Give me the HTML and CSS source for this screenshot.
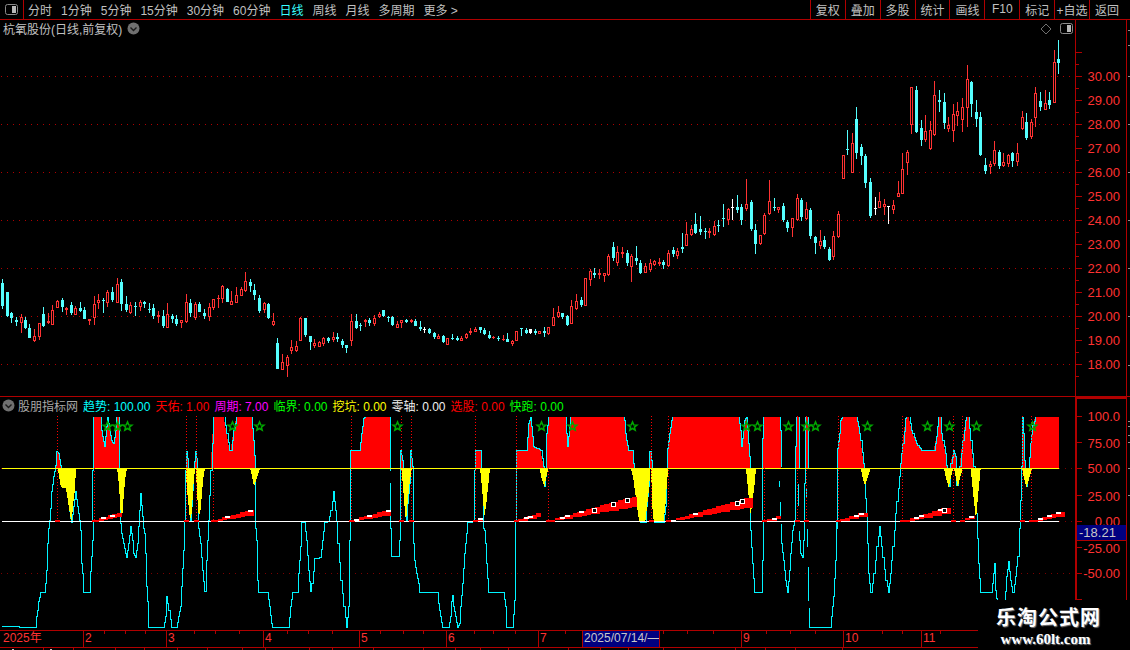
FILE: index.html
```html
<!DOCTYPE html>
<html lang="zh-CN">
<head>
<meta charset="utf-8">
<title>K线图</title>
<link rel="stylesheet" href="styles.css">
</head>
<body>
<div class="app">
  <header class="toolbar">
    <div class="tool-icon">
      <svg class="mini" width="13" height="11" viewBox="0 0 13 11"><rect x="0.5" y="0.5" width="12" height="10" rx="2" class="mini-frame"/><rect x="7" y="2" width="4" height="7" class="mini-fill"/></svg>
    </div>
    <nav class="periods">
      <span>分时</span><span>1分钟</span><span>5分钟</span><span>15分钟</span><span>30分钟</span><span>60分钟</span>
      <span class="on">日线</span><span>周线</span><span>月线</span><span>多周期</span><span>更多 &gt;</span>
    </nav>
    <nav class="actions">
      <span>复权</span><span>叠加</span><span>多股</span><span>统计</span><span>画线</span><span>F10</span><span>标记</span><span>+自选</span><span>返回</span>
    </nav>
  </header>

  <section class="pane pane-main">
    <svg id="price" class="plot" width="1075" height="376" viewBox="0 20 1075 376"></svg>
    <svg class="axis" width="55" height="376" viewBox="1075 20 55 376">
      <path class="axis-line" d="M1075.5 20V396M1126.5 20V396"/>
      <path class="axis-line" d="M1076 76.5h6M1076 100.5h6M1076 124.5h6M1076 148.5h6M1076 172.5h6M1076 196.5h6M1076 220.5h6M1076 244.5h6M1076 268.5h6M1076 292.5h6M1076 316.5h6M1076 340.5h6M1076 364.5h6M1076 52.5h6"/>
      <path class="axis-line" d="M1076 64.5h3M1076 88.5h3M1076 112.5h3M1076 136.5h3M1076 160.5h3M1076 184.5h3M1076 208.5h3M1076 232.5h3M1076 256.5h3M1076 280.5h3M1076 304.5h3M1076 328.5h3M1076 352.5h3M1076 376.5h3"/>
      <path class="axis-side" d="M1128 30h2M1128 45h2M1128 76h2M1128 124h2M1128 172h2M1128 220h2M1128 268h2M1128 316h2M1128 365h2"/>
      <g class="axis-text">
        <text x="1120" y="81">30.00</text><text x="1120" y="105">29.00</text><text x="1120" y="129">28.00</text>
        <text x="1120" y="153">27.00</text><text x="1120" y="177">26.00</text><text x="1120" y="201">25.00</text>
        <text x="1120" y="225">24.00</text><text x="1120" y="249">23.00</text><text x="1120" y="273">22.00</text>
        <text x="1120" y="297">21.00</text><text x="1120" y="321">20.00</text><text x="1120" y="345">19.00</text>
        <text x="1120" y="369">18.00</text>
      </g>
    </svg>
    <div class="pane-head">
      <div class="head-left">
        <span>杭氧股份(日线,前复权)</span>
        <svg class="chev" width="13" height="13" viewBox="0 0 13 13"><circle cx="6.5" cy="6.5" r="6" class="chev-disc"/><path d="M3.5 5.5l3 3 3-3" class="chev-mark"/></svg>
      </div>
      <div class="head-right">
        <svg width="12" height="12" viewBox="0 0 12 12"><path d="M6 1l5 5-5 5-5-5z" class="diamond"/></svg>
        <svg class="mini" width="13" height="11" viewBox="0 0 13 11"><rect x="0.5" y="0.5" width="12" height="10" rx="2" class="mini-frame"/><rect x="7" y="2" width="4" height="7" class="mini-fill"/></svg>
      </div>
    </div>
  </section>

  <section class="pane pane-ind">
    <svg id="indicator" class="plot" width="1075" height="233" viewBox="0 397 1075 233"></svg>
    <svg class="axis" width="55" height="233" viewBox="1075 397 55 233">
      <path class="axis-thick" d="M1076 397V630M1075 398H1126"/>
      <path class="axis-line" d="M1126.5 397V630"/>
      <path class="axis-line" d="M1077 416.5h5M1077 442.5h5M1077 468.5h5M1077 495.5h5M1077 521.5h5M1077 547.5h5M1077 573.5h5M1077 599.5h5"/>
      <path class="axis-side" d="M1128 421h2M1128 426h2M1128 435h2M1128 442h2M1128 468h2M1128 495h2"/>
      <g class="axis-text">
        <text x="1120" y="421">100.0</text><text x="1120" y="448">75.00</text><text x="1120" y="473">50.00</text>
        <text x="1120" y="501">25.00</text><text x="1120" y="526">0.00</text><text x="1120" y="553">-25.00</text>
        <text x="1120" y="578">-50.00</text>
      </g>
      <rect class="value-box" x="1077" y="525" width="49" height="15"/>
      <path class="axis-line" d="M1077 540.5h49"/>
      <text class="value-text" x="1079" y="537">-18.21</text>
    </svg>
    <div class="pane-head ind-head">
      <svg class="chev" width="13" height="13" viewBox="0 0 13 13"><circle cx="6.5" cy="6.5" r="6" class="chev-disc"/><path d="M3.5 5.5l3 3 3-3" class="chev-mark"/></svg>
      <span class="ind-name">股朋指标网</span>
      <span class="c-cyan">趋势: 100.00</span>
      <span class="c-red">天佑: 1.00</span>
      <span class="c-mag">周期: 7.00</span>
      <span class="c-green">临界: 0.00</span>
      <span class="c-yellow">挖坑: 0.00</span>
      <span class="c-white">零轴: 0.00</span>
      <span class="c-red">选股: 0.00</span>
      <span class="c-green">快跑: 0.00</span>
    </div>
  </section>

  <div class="time-axis">
    <span>2025年</span><span>2</span><span>3</span><span>4</span><span>5</span><span>6</span><span>7</span>
    <span class="cursor-date">2025/07/14/—</span><span></span><span>9</span><span>10</span><span>11</span>
    <svg class="time-ticks" width="978" height="4" viewBox="0 0 978 4">
      <path class="axis-line" d="M104.5 0v3M125.5 0v3M145.5 0v3M194.5 0v3M215.5 0v3M239.5 0v3M287.5 0v3M308.5 0v3M332.5 0v3M380.5 0v3M403.5 0v3M423.5 0v3M474.5 0v3M493.5 0v3M515.5 0v3M565.5 0v3M663.5 0v3M687.5 0v3M713.5 0v3M766.5 0v3M790.5 0v3M815.5 0v3M882.5 0v3M902.5 0v3M940.5 0v3"/>
    </svg>
  </div>
  <svg class="strip" width="1130" height="3" viewBox="0 0 1130 3">
    <path class="axis-line" d="M43.5 0v3M73.5 0v3M115.5 0v3M144.5 0v3M177.5 0v3M207.5 0v3M242.5 0v3M265.5 0v3M309.5 0v3M332.5 0v3M373.5 0v3M423.5 0v3M455.5 0v3M480.5 0v3M508.5 0v3M568.5 0v3M600.5 0v3M628.5 0v3M663.5 0v3M735.5 0v3M765.5 0v3M795.5 0v3M842.5 0v3"/>
    <path class="strip-ink" d="M8 2h2M12 1h2M17 2h3M50 1h2M845 2h4M857 2h8"/>
  </svg>

  <aside class="watermark">
    <div class="wm-title">乐淘公式网</div>
    <div class="wm-url">www.60lt.com</div>
  </aside>
</div>
<script src="chart.js"></script>
</body>
</html>
```

FILE: styles.css
```css
* { box-sizing: border-box; }
html, body { margin: 0; padding: 0; background: #000; overflow: hidden; }
body { font-family: "Liberation Sans", "Noto Sans CJK SC", sans-serif; font-size: 12px; color: #c0c0c0; }
.app { position: relative; width: 1130px; height: 650px; display: flex; flex-direction: column; background: #000; overflow: hidden; }

.toolbar { display: flex; height: 20px; border-bottom: 1px solid #b00000; align-items: stretch; flex: none; }
.tool-icon { width: 24px; border-right: 1px solid #b00000; display: flex; align-items: center; justify-content: center; }
.periods { display: flex; flex: 1; align-items: center; gap: 9px; padding: 0 0 1px 4px; white-space: nowrap; }
.periods .on { color: #39ffff; }
.actions { display: flex; align-items: stretch; }
.actions span { width: 34.9px; padding-bottom: 1px; border-left: 1px solid #b00000; display: flex; align-items: center; justify-content: center; white-space: nowrap; }
.actions span:last-child { width: 41px; padding-right: 6px; }

.mini-frame { fill: none; stroke: #8a8a8a; }
.mini-fill { fill: #b8b8b8; }
.chev-disc { fill: #707070; }
.chev-mark { fill: none; stroke: #1a1a1a; stroke-width: 1.4; }
.diamond { fill: none; stroke: #707070; }

.pane { position: relative; display: flex; flex: none; }
.pane-main { height: 376px; }
.pane-ind { height: 234px; border-top: 1px solid #b00000; }
.plot, .axis { display: block; flex: none; }

.pane-head { position: absolute; left: 0; top: 0; width: 1075px; height: 17px; display: flex; align-items: center; }
.head-left { display: flex; align-items: center; gap: 5px; padding-left: 3px; flex: 1; }
.head-right { display: flex; align-items: center; gap: 8px; padding-right: 2px; }
.ind-head { gap: 5px; padding-left: 2px; white-space: nowrap; height: 16px; }
.ind-head .ind-name { margin-left: -2px; color: #a8a8a8; }
.c-cyan { color: #00ffff; }
.c-red { color: #ff0000; }
.c-mag { color: #ff00ff; }
.c-green { color: #00ff00; }
.c-yellow { color: #ffff00; }
.c-white { color: #f0f0f0; }

.axis-line { fill: none; stroke: #b00000; stroke-width: 1; shape-rendering: crispEdges; }
.axis-thick { fill: none; stroke: #b00000; stroke-width: 2; shape-rendering: crispEdges; }
.axis-side { fill: none; stroke: #909090; stroke-width: 1; shape-rendering: crispEdges; }
.axis-text text { fill: #ff3232; font-size: 13px; text-anchor: end; font-family: "Liberation Sans", sans-serif; }
.value-box { fill: #000080; }
.value-text { fill: #c8c8c8; font-size: 13px; font-family: "Liberation Sans", sans-serif; }

.time-axis { position: relative; flex: none; height: 16px; width: 978px; display: grid; grid-template-columns: 83px 83px 97px 96px 87px 92px 44px 77px 82px 102px 78px 57px; border-top: 1px solid #b00000; border-bottom: 1px solid #b00000; box-sizing: content-box; color: #ff3232; font-size: 12px; line-height: 15px; }
.time-axis span { padding-left: 1px; border-left: 1px solid #b00000; white-space: nowrap; overflow: hidden; }
.time-axis span:first-child { padding-left: 3px; border-left: 0; }
.time-axis .cursor-date { background: #000080; color: #c8c8c8; padding-left: 1px; }
.time-axis .cursor-date + span { border-left: 1px solid #b00000; }
.time-ticks { position: absolute; left: 0; top: 0; }
.strip { display: block; flex: none; }
.strip-ink { fill: none; stroke: #c8c8c8; stroke-width: 1; shape-rendering: crispEdges; }

.watermark { position: absolute; right: 0; bottom: 0; width: 152px; height: 50px; background: #000; display: flex; flex-direction: column; align-items: center; padding-top: 6px; padding-right: 14px; }
.wm-title { font-family: "Noto Sans CJK SC", sans-serif; font-weight: 700; font-size: 20px; line-height: 21px; letter-spacing: 1px; margin-left: 3px; color: #fff; text-shadow: 1px 1px 1px #777; }
.wm-url { font-family: "Liberation Serif", serif; font-weight: 700; font-size: 15px; line-height: 16px; margin-top: 4px; margin-right: 3px; color: #fff; text-shadow: 1px 1px 1px #777; }

#price .wick { shape-rendering: crispEdges; }
.grid { fill: none; stroke: #b00000; stroke-dasharray: 1 5; shape-rendering: crispEdges; }
.grid-dim { fill: none; stroke: #7a0000; stroke-dasharray: 1 5; shape-rendering: crispEdges; }
.area { fill: #ff0000; shape-rendering: crispEdges; }
.wedge { fill: #ffff00; shape-rendering: crispEdges; }
.line-cyan { fill: none; stroke: #00f4ff; stroke-width: 1; shape-rendering: crispEdges; }
.line-yellow { fill: none; stroke: #ffff00; stroke-width: 1.4; shape-rendering: crispEdges; }
.line-white { fill: none; stroke: #fff; stroke-width: 1.4; shape-rendering: crispEdges; }
.drop { fill: none; stroke: #ff0000; stroke-dasharray: 1 2; shape-rendering: crispEdges; }
.star { fill: none; stroke: #00a800; stroke-width: 1.5; }
```

FILE: chart.js
```js
(function () {
  var NS = 'http://www.w3.org/2000/svg';
  function el(parent, tag, attrs) {
    var n = document.createElementNS(NS, tag);
    for (var k in attrs) n.setAttribute(k, attrs[k]);
    parent.appendChild(n);
    return n;
  }

  /* ---------- price pane: [colour, x, wickTop, bodyTop, bodyBottom, wickBottom], read at 3x ---------- */
  var A = [['c',7,57,69,138,147],['c',20,114,97,169,171],['c',34,155,159,174,189],['c',49,171,180,186,198],['r',62,163,171,189,219],['c',76,171,180,204,206],['c',88,193,204,234,234],['r',103,207,228,243,246],['r',118,189,189,231,240],['c',130,141,162,198,201],['r',145,159,183,190,192],['r',157,135,150,195,195],['r',172,120,123,144,144],['c',187,114,120,141,156],['r',199,141,144,150,165],['c',214,126,135,159,165],['r',226,138,144,165,165],['c',241,126,144,153,156],['c',253,141,150,177,177],['r',268,177,177,183,195],['r',283,108,132,174,195],['r',295,102,120,129,147],['c',310,114,120,122,159],['r',322,90,96,129,141],['c',337,81,96,120,126],['r',352,54,72,129,129],['c',364,57,66,132,153],['c',379,108,132,150,156],['r',391,126,135,159,162],['c',406,126,138,140,168],['r',421,120,126,141,153],['c',433,123,126,132,144],['c',448,129,147,150,159],['c',460,132,144,168,177],['r',475,153,165,171,189],['c',490,150,168,198,204],['r',502,129,162,204,204],['c',517,162,168,177,189],['c',529,165,177,192,198],['r',544,180,180,189,204],['r',559,102,126,186,189],['c',571,117,129,159,171],['r',586,126,132,174,180],['c',598,126,132,156,156],['c',613,147,159,168,177],['r',628,129,141,171,183],['r',640,117,117,144,150],['r',655,105,114,117,144],['r',667,75,78,117,129],['c',682,84,87,126,126],['r',694,93,123,135,135],['r',709,81,105,129,129],['r',724,81,87,108,108],['r',736,36,63,93,96],['c',751,57,66,78,96],['c',763,72,90,105,120],['c',778,105,114,153,159],['r',793,126,129,150,159],['c',805,129,132,174,177],['r',820,159,183,195,198],['c',832,234,249,327,327],['r',847,282,306,330,330],['r',862,285,291,318,351],['r',874,240,261,273,282],['r',889,243,258,273,276],['r',901,171,174,243,243],['c',916,174,174,225,231],['c',931,228,228,246,270],['r',943,237,249,258,264],['r',958,243,246,261,261],['r',970,231,234,252,258],['c',985,231,234,243,249],['r',1000,216,232,240,246],['c',1012,219,231,237,246],['c',1027,237,243,255,264],['c',1039,255,255,264,279],['r',1054,162,183,243,258],['c',1069,162,183,204,207],['c',1081,189,195,198,213],['r',1096,177,180,186,201],['c',1108,174,180,189,198],['r',1123,165,174,192,198],['r',1138,156,162,171,174],['c',1150,150,150,168,171],['c',1165,168,171,173,186],['c',1177,168,171,195,198],['r',1192,183,192,204,204]];
  var B = [['r',4,450,450,459,474],['c',19,447,450,456,459],['r',34,447,450,456,459],['c',46,447,453,468,468],['c',61,453,471,477,483],['w',73,471,477,478,489],['c',88,474,477,489,492],['c',103,486,489,501,507],['r',115,492,498,507,507],['c',130,495,498,516,519],['r',142,504,504,525,525],['c',157,492,504,507,510],['c',172,498,504,510,513],['r',184,498,504,513,513],['r',199,489,492,504,507],['r',211,474,483,489,495],['r',226,471,477,486,486],['c',241,471,471,480,489],['c',253,474,480,492,495],['c',268,483,495,504,507],['r',280,498,501,504,507],['c',295,498,505,507,513],['r',310,495,507,508,513],['c',322,489,507,516,516],['r',337,510,513,522,528],['r',349,483,483,513,513],['c',364,474,474,477,498],['c',379,474,480,489,492],['w',391,477,477,490,492],['c',406,477,483,489,495],['r',418,483,483,492,492],['c',433,471,483,489,501],['r',445,471,471,492,495],['r',460,414,441,468,468],['r',475,408,426,441,444],['c',487,429,429,441,447],['c',502,435,438,465,468],['r',514,390,408,462,462],['r',529,372,393,417,420],['c',544,381,390,405,411],['r',556,324,324,408,408],['r',571,297,303,330,348],['c',583,294,309,315,324],['r',598,297,309,315,327],['r',613,309,309,318,336],['r',625,252,258,315,318],['c',640,216,231,264,273],['r',652,228,246,279,288],['r',667,231,246,252,264],['c',682,240,249,279,288],['r',694,252,258,291,336],['c',709,228,264,273,285],['c',721,270,279,309,312],['r',736,279,288,309,309],['r',751,267,279,300,306],['r',763,270,273,285,288],['r',778,264,276,282,288],['c',790,270,276,285,297],['r',805,240,249,288,291],['c',820,231,240,252,261],['r',832,234,243,258,267],['c',847,189,231,237,249],['r',859,156,192,228,228],['r',874,165,177,195,198],['c',886,129,162,189,192],['c',901,138,177,186,195],['c',916,174,183,185,207],['r',928,174,183,189,204],['r',943,153,168,195,198],['c',955,150,165,167,186],['c',970,102,144,147,171],['r',985,114,117,150,165],['w',997,87,111,114,150],['c',1012,75,111,120,129],['c',1024,102,111,150,165],['r',1039,27,102,117,123],['c',1054,90,96,177,183],['c',1066,162,180,222,252],['r',1081,195,195,222,225],['r',1093,129,135,192,195],['r',1108,30,93,132,135],['c',1123,84,111,114,123],['r',1135,111,111,120,129],['c',1150,99,108,150,156],['c',1162,150,156,174,186],['r',1177,144,144,174,201],['r',1192,72,84,150,153],['c',1204,84,90,141,153],['r',1219,96,117,147,150],['c',1231,114,120,198,207],['c',1246,198,201,219,252],['r',1261,180,213,228,237],['c',1273,198,210,231,237],['c',1288,231,237,270,273],['r',1300,183,198,261,270],['r',1315,123,132,201,204]];
  var C = [['r',190,346,346,416,416],['c',202,270,327,330,345],['r',217,279,309,399,399],['c',229,201,237,339,357],['c',244,312,321,348,375],['c',256,342,348,429,444],['c',271,414,426,528,534],['w',286,471,504,507,525],['r',298,456,483,504,504],['r',313,477,492,501,525],['w',325,498,498,500,552],['r',340,480,495,510,522],['r',355,423,459,471,471],['r',367,339,387,462,462],['r',382,330,336,369,405],['r',394,141,141,255,282],['c',409,138,150,276,279],['c',424,240,264,300,318],['r',436,225,273,300,306],['r',451,243,270,327,330],['r',463,123,165,285,288],['c',478,150,180,186,216],['c',493,159,186,249,267],['r',505,231,255,267,276],['r',520,192,222,273,306],['r',532,186,213,228,258],['r',547,174,201,240,276],['r',562,75,117,204,261],['c',574,123,126,192,231],['c',589,180,216,237,261],['c',601,216,231,345,348],['c',616,354,375,393,402],['r',631,363,372,381,402],['r',643,303,330,372,378],['c',658,330,336,378,387],['r',670,339,366,378,381],['r',685,342,345,372,381],['c',697,336,339,363,381],['r',712,309,339,366,378],['r',727,213,231,267,270],['c',739,219,246,294,300],['r',754,237,246,291,297],['r',766,141,159,234,261],['c',781,156,183,201,213],['r',796,150,189,210,210],['c',808,156,180,195,207],['r',823,30,66,189,189],['c',835,0,57,69,102]];

  var price = document.getElementById('price');
  [76.5, 124.5, 172.5, 220.5, 268.5, 316.5, 364.5].forEach(function (y) {
    el(price, 'path', { d: 'M1 ' + y + 'H1075', 'class': 'grid' });
  });
  var FILL = { c: '#55ffff', r: '#ff3232', w: '#ffffff' };
  function candles(list, xo, yo) {
    list.forEach(function (k) {
      var col = FILL[k[0]], p = Math.round(xo + k[1] / 3);
      var wt = Math.round(yo + k[2] / 3), bt = Math.round(yo + k[3] / 3), bb = Math.round(yo + k[4] / 3), wb = Math.round(yo + k[5] / 3);
      el(price, 'rect', { x: p, y: wt, width: 1, height: Math.max(1, wb - wt), fill: col, 'class': 'wick' });
      var h = bb - bt;
      if (h < 2) {
        el(price, 'rect', { x: p - 1, y: bt, width: 3, height: 1, fill: col, 'class': 'wick' });
      } else if (k[0] === 'r') {
        el(price, 'rect', { x: p - 0.5, y: bt + 0.5, width: 2, height: h - 1, fill: '#000', stroke: col, 'class': 'wick' });
      } else {
        el(price, 'rect', { x: p - 1, y: bt, width: 3, height: h, fill: col, 'class': 'wick' });
      }
    });
  }
  candles(A, 0, 260);
  candles(B, 400, 170);
  candles(C, 780, 40);

  /* ---------- indicator pane ---------- */
  var ind = document.getElementById('indicator');
  var W3 = [0, 390], W4 = [300, 390], W5 = [600, 400], W6 = [850, 400], W7 = [0, 520], W8 = [400, 520];
  var trace = [
    [W7, [3,318,105,322,108,290,112,270,116,245,120,218,132,216,135,190,138,150,142,70,146,25,149,0]],
    [W3, [150,355,155,305,160,260,165,225,170,183,175,190,180,225,188,280,198,295,205,340,212,385,214,397,220,350,226,305,232,350,238,390]],
    [W7, [240,30,245,130,250,190,250,217,270,217,272,155,277,60,279,0]],
    [W3, [278,240,280,78,300,78,305,120,310,155,313,170,318,110,322,78,328,120,335,150,340,160,345,120,350,78,355,78,357,170,358,240,360,300,361,400]],
    [W7, [365,40,370,70,375,100,379,112,384,70,391,18,396,60,401,100,407,112,412,70,415,20]],
    [W3, [421,310,427,380,430,415]],
    [W7, [432,40,436,100,440,200,444,290,446,322,491,322,495,290,499,230,505,270,513,322,530,322,535,290,540,260,545,200,550,90,553,0]],
    [W3, [555,240,558,183,563,205,566,300,572,395,578,300,581,240,585,183,590,205,592,300,595,415]],
    [W7, [600,70,606,150,612,215,616,215,620,120,625,0]],
    [W3, [630,240,640,78,670,78,680,130,688,180,692,180,700,120,710,78,755,78,760,150,765,240,765,415]],
    [W7, [768,60,772,180,776,217,803,217,808,260,815,310,818,322,864,322,870,260,876,218,892,216,896,160,900,80,905,8,913,8,918,60,925,150,930,215,935,190,942,115,960,112,966,60,972,8,985,5]],
    [W4, [85,395,90,360,100,305,105,360,110,395,113,415]],
    [W7, [1012,70,1020,180,1030,260,1040,322,1044,260,1048,60,1052,0]],
    [W4, [152,180,178,180,185,130,190,85,195,78,268,78,270,130,272,240,null,268,280,270,415]],
    [W7, [1174,110,1195,110,1198,60,1200,0]],
    [W4, [300,280,302,180,308,210,312,340,318,395,322,340,328,280,332,180,338,230,340,400]],
    [W8, [40,10,40,70,44,120,48,160,54,190,58,217,112,217,116,250,120,290,127,322,145,322,150,290,155,245,157,225,160,260,165,290,172,322,178,310,182,260,186,190,192,100,198,40,203,8,212,8]],
    [W4, [520,390,522,240,525,180,540,180,545,240,550,300,550,415]],
    [W8, [252,30,256,70,260,130,265,217,308,217,315,260,320,322,338,322,342,240,345,100,347,0]],
    [W4, [650,180,680,180,685,100,690,78,695,110,700,170,720,180,730,230,733,290,738,230,740,130,745,78,795,78,798,130,802,170,807,110,812,78]],
    [W5, [70,48,72,60,76,100,80,120,85,150,97,152,100,190,104,205,108,270,115,340,122,367,136,367,140,320,145,260,148,155,150,155,156,205,156,310,162,367,190,367,195,320,200,230,202,145,207,100,213,60,218,48,415,48,420,90,425,140,430,90,432,60,440,48,445,130,450,205,452,360,452,390]],
    [W8, [1052,30,1058,130,1064,217,1085,217,1087,120,1090,0]],
    [W5, [487,205,487,115,490,100,490,48,537,48,542,90,545,200,null,538,240,538,260,null,540,305,540,345,null,545,372,545,390]],
    [W8, [1145,10,1145,70,1150,120,1155,180,1162,217,1168,150,1172,100,1178,30,1182,0]],
    [W5, [585,210,585,140,590,48,595,48,597,100,597,205,null,595,250,595,315]],
    [W8, [null,1198,30,1198,60,1202,100,1206,112,1210,60,1212,0]],
    [W5, [614,250,617,48,622,48,625,125,625,205,null,618,265,618,290]],
    [W8, [null,1222,25,1222,80,null,1225,140,1225,240,null,1228,262,1228,322,1290,322,1295,290,1300,230,1305,120,1308,40,1310,0]],
    [W5, [708,385,712,250,712,145,718,100,722,60,728,48,770,48,775,80,778,100]],
    [W6, [30,120,40,190,44,240,48,350,52,430,56,520,62,577,70,520,78,440,88,380,95,440,105,540,115,577,120,520,127,440,135,340,150,190,156,130,165,55,170,48,175,48,185,90,200,130,215,150,250,150,258,110,265,50,270,48,275,100,285,160,292,230,297,260,302,190,310,150,315,170,320,255,328,200,338,120,345,60,350,50,355,48,362,120,370,200,378,340,385,490,390,577,424,577,430,520,433,490,437,570,441,620,461,620,470,530,475,485,482,540,488,577,495,530,503,470,510,300,515,200,518,50,521,100,522,180,528,260,535,210,540,130,548,75,555,48,628,48]]
  ];

  /* The terminal draws the curve on a pixel grid, so a slope reads as small stairs. */
  var stroke = '', fillPts = [], last = null;
  function snap(v) { return Math.floor(v) + 0.5; }
  trace.forEach(function (seg) {
    var w = seg[0], a = seg[1], i = 0;
    while (i < a.length) {
      if (a[i] === null) { last = null; i += 1; continue; }
      var x = snap(w[0] + a[i] / 3), y = snap(w[1] + a[i + 1] / 3);
      fillPts.push(x + ',' + y);
      if (!last) {
        stroke += 'M' + x + ' ' + y;
      } else {
        var dx = x - last[0], n = Math.max(1, Math.ceil(Math.abs(dx) / 1.5));
        if (Math.abs(y - last[1]) < 1) n = 1;
        for (var s = 1; s <= n; s++) {
          var sx = snap(last[0] + dx * s / n), sy = snap(last[1] + (y - last[1]) * s / n);
          stroke += 'H' + sx + 'V' + sy;
        }
      }
      last = [x, y];
      i += 2;
    }
  });

  var defs = el(ind, 'defs', {});
  var clip = el(defs, 'clipPath', { id: 'aboveFifty' });
  el(clip, 'rect', { x: 0, y: 397, width: 1075, height: 71.5 });
  var clip2 = el(defs, 'clipPath', { id: 'belowCap' });
  el(clip2, 'rect', { x: 0, y: 417, width: 1075, height: 213 });

  el(ind, 'polygon', { points: '1,468 ' + fillPts.join(' ') + ' 1059,468', 'class': 'area', 'clip-path': 'url(#aboveFifty)' });

  ['M1 573.5H1075', 'M1059 468.5H1075', 'M1059 521.5H1075'].forEach(function (d) {
    el(ind, 'path', { d: d, 'class': 'grid-dim' });
  });

  el(ind, 'path', { d: stroke, 'class': 'line-cyan', 'clip-path': 'url(#belowCap)' });

  var wedges = [
    [W3, [173,235,178,265,183,292,198,295,205,340,212,385,215,392,220,340,225,295,228,235]],
    [W3, [351,235,355,265,358,300,361,350,363,378,367,378,371,320,376,265,381,235]],
    [W3, [558,235,560,290,565,340,570,390,575,370,580,290,585,235]],
    [W3, [587,235,590,290,595,370,600,375,605,320,610,265,615,235]],
    [W3, [750,235,755,255,762,290,770,265,780,235]],
    [W4, [304,235,308,280,313,340,318,395,322,350,328,285,335,235]],
    [W4, [540,235,545,285,550,340,553,378,558,350,565,285,570,235]],
    [W4, [718,235,725,265,733,290,738,265,745,235]],
    [W5, [93,205,100,235,105,275,112,325,118,367,136,367,143,300,148,260,150,205]],
    [W5, [152,205,155,260,158,340,162,367,190,367,196,320,200,260,205,205]],
    [W5, [438,205,442,245,447,300,452,345,458,300,464,250,468,205]],
    [W6, [32,205,38,235,45,258,50,240,56,225,62,205]],
    [W6, [282,205,288,235,296,262,302,235,310,205]],
    [W6, [312,205,318,235,323,262,330,235,338,205]],
    [W6, [362,205,367,255,372,305,378,360,383,300,388,250,392,205]],
    [W6, [516,205,522,235,529,262,536,240,546,205]]
  ];
  wedges.forEach(function (s) {
    var pts = [];
    for (var i = 0; i < s[1].length; i += 2) {
      pts.push((s[0][0] + s[1][i] / 3).toFixed(1) + ',' + (s[0][1] + s[1][i + 1] / 3).toFixed(1));
    }
    el(ind, 'polygon', { points: pts.join(' '), 'class': 'wedge' });
  });

  el(ind, 'path', { d: 'M2 468.5H1059', 'class': 'line-yellow' });
  el(ind, 'path', { d: 'M2 521.5H1059', 'class': 'line-white' });

  /* dotted verticals: [x, top] */
  var drops = [[57,416],[94,468],[186,416],[196,416],[213,468],[351,416],[401,416],[411,416],[475,416],[516,416],[548,468],[651,416],[668,416],[764,468],[797,416],[806,416],[838,416],[902,416],[953,416],[962,416],[1022,416],[1031,416]];
  drops.forEach(function (d) {
    el(ind, 'path', { d: 'M' + (d[0] + 0.5) + ' ' + d[1] + 'V521', 'class': 'drop' });
    el(ind, 'rect', { x: d[0] - 2, y: 520, width: 5, height: 2, fill: '#ff0000' });
  });

  /* stepped ramps rising from the zero line */
  var ramps = [
    [94,120,513,[101,110],[]],[213,253,510,[225,248],[]],[350,391,510,[354,367,386],[]],
    [478,483,518,[478],[]],[518,541,513,[524,528],[]],[550,634,497,[560,565,579],[592,611,625]],
    [671,749,498,[671,693],[735,740]],[767,781,516,[772],[]],[840,864,513,[854,859],[]],
    [905,947,508,[914,919,938],[942]],[965,974,516,[969],[]],[1033,1061,512,[1038,1047,1056],[]]
  ];
  var STEP = 4.54;
  function topAt(r, x) { return 521 - (521 - r[2]) * Math.min(1, (x - r[0] + STEP) / (r[1] - r[0])); }
  function thick(top) { return 1.5 + (521 - top) * 0.37; }
  ramps.forEach(function (r) {
    for (var x = r[0]; x < r[1] - 0.5; x += STEP) {
      var t = topAt(r, x);
      el(ind, 'rect', { x: Math.round(x), y: Math.round(t), width: 5, height: Math.round(thick(t)), fill: '#ff0000' });
    }
    r[3].forEach(function (x) {
      var t = topAt(r, x);
      el(ind, 'rect', { x: Math.round(x), y: Math.round(t), width: 5, height: 2, fill: '#ffffff' });
    });
    r[4].forEach(function (x) {
      var t = topAt(r, x);
      el(ind, 'rect', { x: Math.round(x), y: Math.round(t), width: 5, height: 5, fill: '#ffffff' });
      el(ind, 'rect', { x: Math.round(x) + 1, y: Math.round(t) + 1, width: 3, height: 3, fill: '#000000' });
    });
  });

  /* stars */
  [107,117,127,232,259,397,541,572,632,746,757,788,806,815,867,927,949,976,1032].forEach(function (cx) {
    var pts = [];
    for (var i = 0; i < 10; i++) {
      var r = i % 2 ? 2 : 4.6, a = -Math.PI / 2 + i * Math.PI / 5;
      pts.push((cx + 0.5 + r * Math.cos(a)).toFixed(1) + ',' + (426.5 + r * Math.sin(a)).toFixed(1));
    }
    el(ind, 'polygon', { points: pts.join(' '), 'class': 'star' });
  });
})();
```
